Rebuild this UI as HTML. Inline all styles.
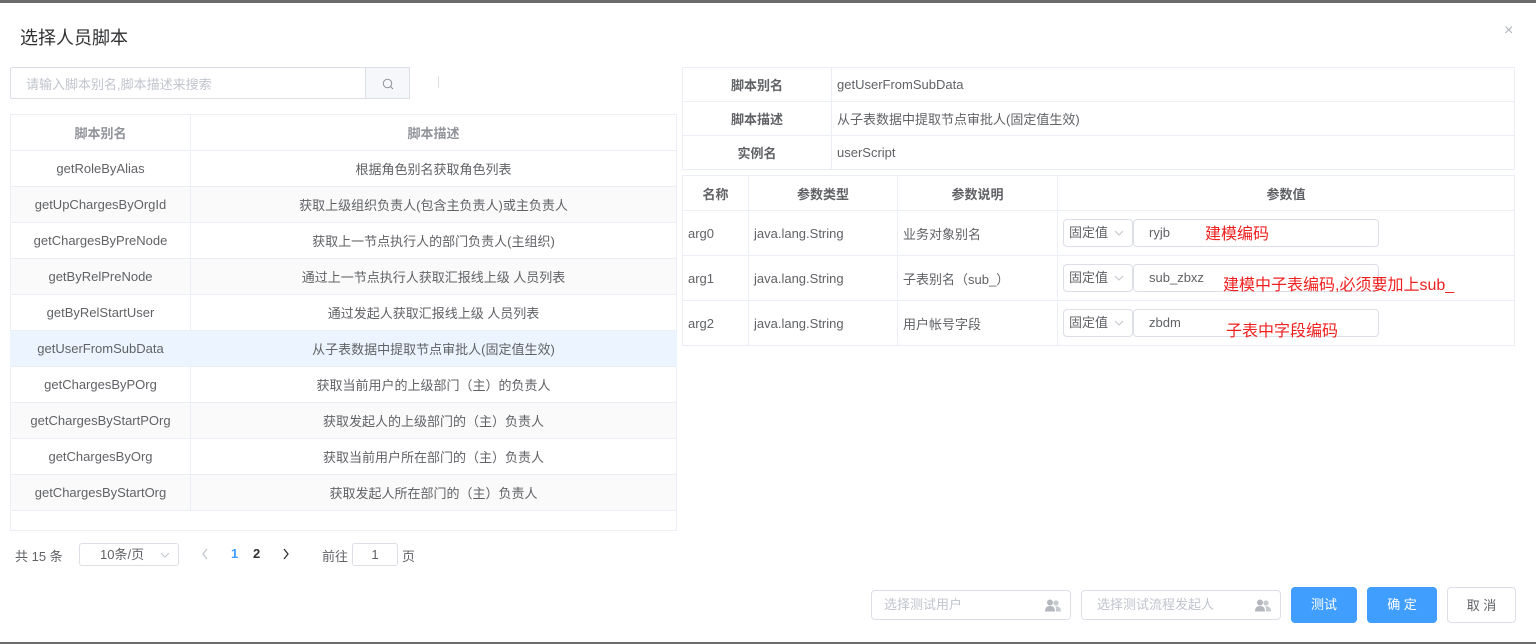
<!DOCTYPE html>
<html><head><meta charset="utf-8"><style>
*{box-sizing:border-box;margin:0;padding:0}
body{width:1536px;height:644px;background:#6b6b6b;position:relative;overflow:hidden;font-family:"Liberation Sans","Noto Sans CJK SC",sans-serif;font-size:13px;color:#606266}
.m{position:absolute;left:0;top:3px;width:1536px;height:639px;background:#fff}
.a{position:absolute}
.t{position:absolute;border-collapse:collapse}
.t td{border:1px solid #ebeef5;padding:0 5px}
.lt td{text-align:center;height:36px}
.lt tr:nth-child(odd) td{background:#fafafa}
.lt tr.h td{background:#fff;font-weight:600;color:#909399}
.lt tr.sel td{background:#ecf5ff;border-left-color:#ecf5ff;border-right-color:#ecf5ff}
.rt td{height:34px}
.rt td.l{text-align:center;font-weight:600;color:#606266;background:#fff}
.pt td{height:45px}
.pt tr.h td{height:35px;text-align:center;font-weight:600;color:#606266}
.sel2{display:inline-block;position:relative;width:70px;height:28px;border:1px solid #dcdfe6;border-radius:4px;vertical-align:middle;line-height:26px;padding-left:5px;font-size:13px;color:#606266}
.sel2 svg{position:absolute;right:8px;top:10px}
.inp{display:inline-block;width:246px;height:28px;border:1px solid #dcdfe6;border-radius:4px;vertical-align:middle;line-height:26px;padding-left:15px}
.red{position:absolute;color:#f02020;font-size:16px}
.btn{position:absolute;top:584px;height:36px;border-radius:4px;text-align:center;line-height:36px;font-size:13px}
.ic{position:absolute;right:9px;top:8px}
</style></head><body>
<div class="m"></div>
<div class="a" style="left:20px;top:24px;font-size:18px;color:#303133">选择人员脚本</div>
<div class="a" style="left:1504px;top:22px;font-size:16px;color:#b0b3b8">×</div>
<div class="a" style="left:10px;top:67px;width:400px;height:32px;border:1px solid #dcdfe6;border-radius:2px"></div>
<div class="a" style="left:26px;top:74px;color:#c0c4cc">请输入脚本别名,脚本描述来搜索</div>
<div class="a" style="left:365px;top:67px;width:45px;height:32px;background:#f5f7fa;border:1px solid #dcdfe6;text-align:center;line-height:30px;color:#909399">
<svg width="12" height="12" viewBox="0 0 12 12" style="vertical-align:middle"><circle cx="5.5" cy="5.5" r="4.2" fill="none" stroke="#909399" stroke-width="1"/><path d="M8.5 8.5L11 11" stroke="#909399"/></svg></div>
<div class="a" style="left:438px;top:76px;width:1px;height:12px;background:#dcdfe6"></div>

<table class="t lt" style="left:10px;top:114px;width:667px">
<col style="width:180px"><col>
<tr class="h"><td>脚本别名</td><td>脚本描述</td></tr>
<tr><td>getRoleByAlias</td><td>根据角色别名获取角色列表</td></tr>
<tr><td>getUpChargesByOrgId</td><td>获取上级组织负责人(包含主负责人)或主负责人</td></tr>
<tr><td>getChargesByPreNode</td><td>获取上一节点执行人的部门负责人(主组织)</td></tr>
<tr><td>getByRelPreNode</td><td>通过上一节点执行人获取汇报线上级 人员列表</td></tr>
<tr><td>getByRelStartUser</td><td>通过发起人获取汇报线上级 人员列表</td></tr>
<tr class="sel"><td>getUserFromSubData</td><td>从子表数据中提取节点审批人(固定值生效)</td></tr>
<tr><td>getChargesByPOrg</td><td>获取当前用户的上级部门（主）的负责人</td></tr>
<tr><td>getChargesByStartPOrg</td><td>获取发起人的上级部门的（主）负责人</td></tr>
<tr><td>getChargesByOrg</td><td>获取当前用户所在部门的（主）负责人</td></tr>
<tr><td>getChargesByStartOrg</td><td>获取发起人所在部门的（主）负责人</td></tr>
</table>
<div class="a" style="left:10px;top:510px;width:667px;height:21px;border:1px solid #ebeef5;border-top:none"></div>

<div class="a" style="left:15px;top:546px">共 15 条</div>
<div class="a" style="left:79px;top:543px;width:100px;height:23px;border:1px solid #dcdfe6;border-radius:3px;line-height:21px;padding-left:20px">10条/页<svg width="10" height="6" viewBox="0 0 10 6" style="position:absolute;right:8px;top:8px"><path d="M1 1L5 5L9 1" fill="none" stroke="#c0c4cc"/></svg></div>
<svg class="a" style="left:201px;top:548px" width="8" height="12" viewBox="0 0 8 12"><path d="M6 1L2 6L6 11" fill="none" stroke="#c0c4cc" stroke-width="1.3"/></svg>
<div class="a" style="left:231px;top:546px;color:#409eff;font-weight:bold">1</div>
<div class="a" style="left:253px;top:546px;color:#303133;font-weight:bold">2</div>
<svg class="a" style="left:282px;top:548px" width="8" height="12" viewBox="0 0 8 12"><path d="M2 1L6 6L2 11" fill="none" stroke="#303133" stroke-width="1.3"/></svg>
<div class="a" style="left:322px;top:546px">前往</div>
<div class="a" style="left:352px;top:543px;width:46px;height:23px;border:1px solid #dcdfe6;border-radius:3px;text-align:center;line-height:21px">1</div>
<div class="a" style="left:402px;top:546px">页</div>

<table class="t rt" style="left:682px;top:67px;width:833px">
<col style="width:149px"><col>
<tr><td class="l">脚本别名</td><td>getUserFromSubData</td></tr>
<tr><td class="l">脚本描述</td><td>从子表数据中提取节点审批人(固定值生效)</td></tr>
<tr><td class="l">实例名</td><td>userScript</td></tr>
</table>

<table class="t pt" style="left:682px;top:175px;width:833px">
<col style="width:66px"><col style="width:149px"><col style="width:160px"><col>
<tr class="h"><td>名称</td><td>参数类型</td><td>参数说明</td><td>参数值</td></tr>
<tr><td>arg0</td><td>java.lang.String</td><td>业务对象别名</td><td><span class="sel2">固定值<svg width="10" height="6" viewBox="0 0 10 6"><path d="M1 1L5 5L9 1" fill="none" stroke="#c0c4cc"/></svg></span><span class="inp">ryjb</span></td></tr>
<tr><td>arg1</td><td>java.lang.String</td><td>子表别名（sub_）</td><td><span class="sel2">固定值<svg width="10" height="6" viewBox="0 0 10 6"><path d="M1 1L5 5L9 1" fill="none" stroke="#c0c4cc"/></svg></span><span class="inp">sub_zbxz</span></td></tr>
<tr><td>arg2</td><td>java.lang.String</td><td>用户帐号字段</td><td><span class="sel2">固定值<svg width="10" height="6" viewBox="0 0 10 6"><path d="M1 1L5 5L9 1" fill="none" stroke="#c0c4cc"/></svg></span><span class="inp">zbdm</span></td></tr>
</table>
<div class="red" style="left:1205px;top:220px">建模编码</div>
<div class="red" style="left:1223px;top:271px">建模中子表编码,必须要加上sub_</div>
<div class="red" style="left:1226px;top:317px">子表中字段编码</div>

<div class="a" style="left:871px;top:590px;width:200px;height:30px;border:1px solid #dcdfe6;border-radius:4px;padding-left:12px;line-height:28px;color:#c0c4cc">选择测试用户<svg class="ic" width="16" height="13" viewBox="0 0 16 13"><circle cx="5" cy="3.5" r="3" fill="#b4b7bd"/><path d="M0 12.5C0 8.5 2 7 5 7S10 8.5 10 12.5Z" fill="#b4b7bd"/><circle cx="11" cy="4" r="2.6" fill="#c6c9ce"/><path d="M10.5 7.3C14 7.3 16 8.8 16 12.5H11C11 10 10.8 8.5 10.5 7.3Z" fill="#c6c9ce"/></svg></div>
<div class="a" style="left:1081px;top:590px;width:200px;height:30px;border:1px solid #dcdfe6;border-radius:4px;padding-left:15px;line-height:28px;color:#c0c4cc">选择测试流程发起人<svg class="ic" width="16" height="13" viewBox="0 0 16 13"><circle cx="5" cy="3.5" r="3" fill="#b4b7bd"/><path d="M0 12.5C0 8.5 2 7 5 7S10 8.5 10 12.5Z" fill="#b4b7bd"/><circle cx="11" cy="4" r="2.6" fill="#c6c9ce"/><path d="M10.5 7.3C14 7.3 16 8.8 16 12.5H11C11 10 10.8 8.5 10.5 7.3Z" fill="#c6c9ce"/></svg></div>
<div class="btn" style="left:1291px;top:587px;width:66px;background:#409eff;color:#fff">测试</div>
<div class="btn" style="left:1367px;top:587px;width:70px;background:#409eff;color:#fff">确 定</div>
<div class="btn" style="left:1447px;top:587px;width:69px;border:1px solid #dcdfe6;color:#606266;background:#fff">取 消</div>
</body></html>
